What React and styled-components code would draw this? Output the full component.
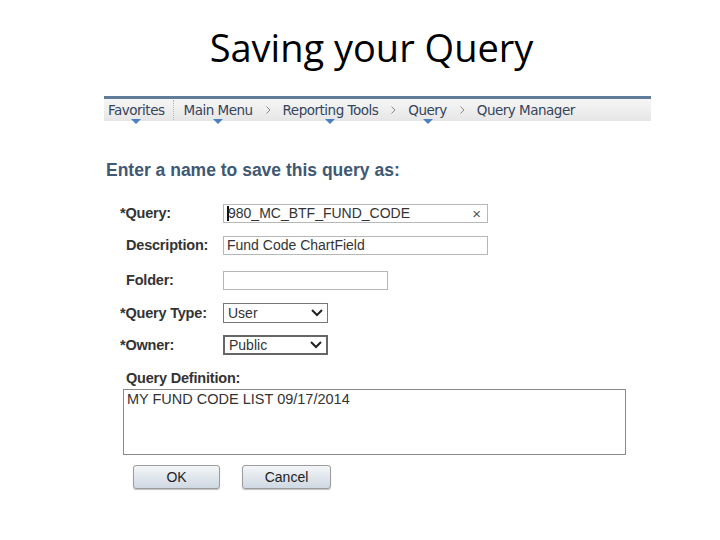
import React from 'react'
import styled, { createGlobalStyle } from 'styled-components'

const GlobalStyle = createGlobalStyle`
    body {
        margin: 0;
        background: #ffffff;
    }
`

function Caret() {
    return (
        <svg width="10" height="5" viewBox="0 0 10 5">
            <path d="M0 0 L10 0 L5 5 Z" fill="#4a7fc0" />
        </svg>
    )
}

function Chevron() {
    return (
        <ChevronWrap>
            <svg width="7" height="10" viewBox="0 0 7 10">
                <path d="M1.5 1.5 L5 5 L1.5 8.5" fill="none" stroke="#8a8a8a" strokeWidth="1" />
            </svg>
        </ChevronWrap>
    )
}

function SelectArrow() {
    return (
        <svg width="12" height="8" viewBox="0 0 12 8">
            <path d="M1 1 L6 6 L11 1" fill="none" stroke="#222" strokeWidth="2" />
        </svg>
    )
}

function App() {
    return (
        <Page>
            <GlobalStyle />
            <Title>Saving your Query</Title>
            <Panel>
                <NavBar>
                    <NavItem>Favorites<CaretWrap><Caret /></CaretWrap></NavItem>
                    <Divider />
                    <NavItem>Main Menu<CaretWrap><Caret /></CaretWrap></NavItem>
                    <Chevron />
                    <NavItem>Reporting Tools<CaretWrap><Caret /></CaretWrap></NavItem>
                    <Chevron />
                    <NavItem>Query<CaretWrap><Caret /></CaretWrap></NavItem>
                    <Chevron />
                    <NavItem>Query Manager</NavItem>
                </NavBar>

                <Heading>Enter a name to save this query as:</Heading>

                <Form>
                    <Row>
                        <Label $required>*Query:</Label>
                        <TextBox $width={265}>
                            <Cursor />
                            <span>980_MC_BTF_FUND_CODE</span>
                            <Clear>×</Clear>
                        </TextBox>
                    </Row>
                    <Row $space={15}>
                        <Label>Description:</Label>
                        <TextBox $width={265}>Fund Code ChartField</TextBox>
                    </Row>
                    <Row $space={13}>
                        <Label>Folder:</Label>
                        <TextBox $width={165} />
                    </Row>
                    <Row>
                        <Label $required>*Query Type:</Label>
                        <Select>User<SelectArrow /></Select>
                    </Row>
                    <Row $space={0}>
                        <Label $required>*Owner:</Label>
                        <Select $dark>Public<SelectArrow /></Select>
                    </Row>
                </Form>

                <Definition>
                    <DefLabel>Query Definition:</DefLabel>
                    <TextArea>MY FUND CODE LIST 09/17/2014</TextArea>
                </Definition>

                <Buttons>
                    <Button $width={87}>OK</Button>
                    <Button $width={89}>Cancel</Button>
                </Buttons>
            </Panel>
        </Page>
    )
}

export default App

const Page = styled.div`
    width: 720px;
    height: 540px;
    display: flex;
    flex-direction: column;
    font-family: "Liberation Sans", Arial, sans-serif;
`

const Title = styled.h1`
    margin: 22px 0 0;
    padding-left: 23px;
    text-align: center;
    font-family: "Open Sans", "Noto Sans", sans-serif;
    font-weight: 400;
    font-size: 38px;
    line-height: 50px;
    color: #000;
`

const Panel = styled.div`
    width: 547px;
    margin-top: 24px;
    margin-left: 104px;
`

const NavBar = styled.div`
    height: 22px;
    border-top: 3px solid #5f7d99;
    background: linear-gradient(#f6f6f6, #e6e6e6);
    display: flex;
    align-items: center;
    padding-left: 4px;
    font-family: "DejaVu Sans", Tahoma, sans-serif;
    font-size: 13.5px;
    letter-spacing: -0.5px;
    color: #34455a;
`

const NavItem = styled.div`
    position: relative;
    height: 22px;
    line-height: 22px;
    white-space: nowrap;
`

const CaretWrap = styled.span`
    position: absolute;
    left: 50%;
    bottom: -3px;
    transform: translateX(-50%);
    display: flex;
`

const ChevronWrap = styled.span`
    display: flex;
    margin: 0 11px 0 12px;
`

const Divider = styled.div`
    width: 0;
    height: 20px;
    border-left: 1px dotted #b5b5b5;
    margin: 0 9px 0 9px;
`

const Heading = styled.h2`
    margin: 38px 0 0 2px;
    font-size: 17.5px;
    font-weight: 700;
    color: #3f5873;
    line-height: 22px;
`

const Form = styled.div`
    margin-top: 22px;
    padding-left: 16px;
    display: flex;
    flex-direction: column;
`

const Row = styled.div`
    display: grid;
    grid-template-columns: 103px auto;
    align-items: center;
    height: 20px;
    margin-bottom: ${p => (p.$space ?? 12)}px;
`

const Label = styled.div`
    font-size: 14.5px;
    font-weight: 700;
    color: #333;
    padding-left: ${p => (p.$required ? 0 : 6)}px;
    letter-spacing: -0.2px;
`

const TextBox = styled.div`
    width: ${p => p.$width}px;
    height: 19px;
    box-sizing: border-box;
    border: 1px solid #b7b7b7;
    display: flex;
    align-items: center;
    padding: 0 3px;
    font-size: 14px;
    color: #333;
    white-space: nowrap;
`

const Cursor = styled.span`
    width: 2px;
    height: 15px;
    background: #111;
    margin-right: -1px;
`

const Clear = styled.span`
    margin-left: auto;
    margin-right: 3px;
    font-size: 15px;
    color: #555;
`

const Select = styled.div`
    width: 105px;
    height: 20px;
    box-sizing: border-box;
    border: ${p => (p.$dark ? '2px solid #666' : '1px solid #777')};
    display: flex;
    align-items: center;
    justify-content: space-between;
    padding: 0 4px 0 4px;
    font-size: 14px;
    color: #333;
`

const Definition = styled.div`
    margin-top: 15px;
    padding-left: 19px;
`

const DefLabel = styled.div`
    margin-left: 3px;
    font-size: 14.5px;
    font-weight: 700;
    color: #333;
    letter-spacing: -0.2px;
    line-height: 16px;
`

const TextArea = styled.div`
    margin-top: 3px;
    width: 503px;
    height: 66px;
    box-sizing: border-box;
    border: 1px solid #8a8a8a;
    padding: 2px 3px;
    font-size: 14.5px;
    color: #333;
    line-height: 15px;
`

const Buttons = styled.div`
    display: flex;
    gap: 22px;
    margin-top: 10px;
    padding-left: 29px;
`

const Button = styled.button`
    width: ${p => p.$width}px;
    height: 24px;
    border: 1px solid #9b9b9b;
    border-radius: 3px;
    background: linear-gradient(#f4f6f8 0%, #e3e8ee 45%, #cfd8e2 100%);
    box-shadow: 0 1px 1px rgba(0, 0, 0, 0.25);
    font-family: "Liberation Sans", Arial, sans-serif;
    font-size: 14px;
    color: #222;
    padding: 0;
`
